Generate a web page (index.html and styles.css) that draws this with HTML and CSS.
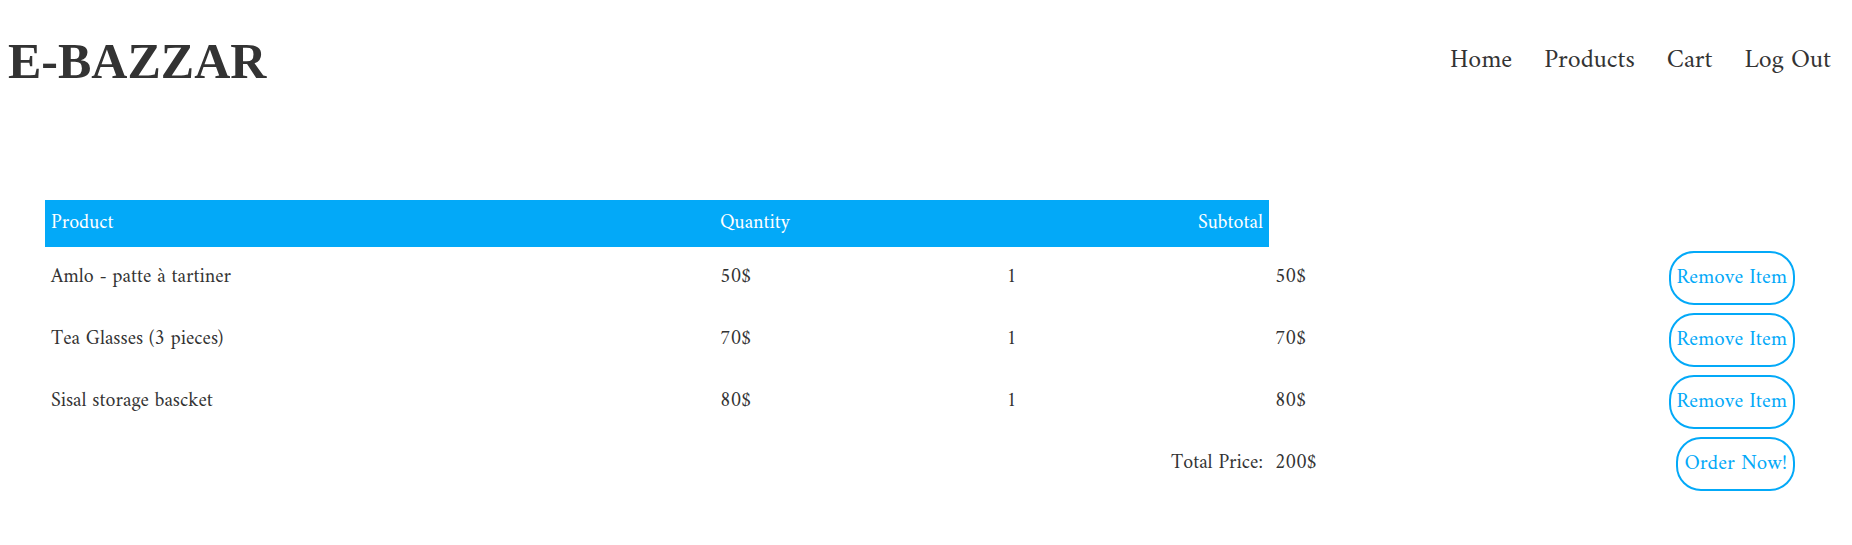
FILE: index.html
```html
<!DOCTYPE html>
<html lang="en">
<head>
  <meta charset="utf-8">
  <title>E-BAZZAR - Cart</title>
  <link rel="stylesheet" href="styles.css">
</head>
<body>
  <header class="navbar">
    <h1 class="logo">E-BAZZAR</h1>
    <nav>
      <ul class="menu">
        <li><a href="#">Home</a></li>
        <li><a href="#">Products</a></li>
        <li><a href="#">Cart</a></li>
        <li><a href="#">Log Out</a></li>
      </ul>
    </nav>
  </header>
  <main class="cart">
    <table class="cart-table">
      <colgroup>
        <col class="col-product">
        <col class="col-price">
        <col class="col-quantity">
        <col class="col-subtotal">
      </colgroup>
      <thead>
        <tr><th>Product</th><th>Quantity</th><th class="right">Subtotal</th></tr>
      </thead>
      <tbody>
        <tr><td>Amlo - patte à tartiner</td><td>50$</td><td>1</td><td><div class="amount">50$ <button class="btn" type="button">Remove Item</button></div></td></tr>
        <tr><td>Tea Glasses (3 pieces)</td><td>70$</td><td>1</td><td><div class="amount">70$ <button class="btn" type="button">Remove Item</button></div></td></tr>
        <tr><td>Sisal storage bascket</td><td>80$</td><td>1</td><td><div class="amount">80$ <button class="btn" type="button">Remove Item</button></div></td></tr>
        <tr><td></td><td></td><td class="right">Total Price:</td><td><div class="amount">200$ <button class="btn" type="button">Order Now!</button></div></td></tr>
      </tbody>
    </table>
  </main>
</body>
</html>
```
FILE: styles.css
```css
* {
  box-sizing: border-box;
  margin: 0;
  padding: 0;
}

body {
  background: #fff;
  color: #333;
  font-family: Amiri, "Liberation Serif", serif;
  font-size: 20px;
  line-height: 30px;
}

.navbar {
  display: flex;
  align-items: center;
  justify-content: space-between;
  padding: 31px 21px 0 8px;
}

.logo {
  font-family: "Liberation Serif", serif;
  font-size: 50px;
  line-height: 60px;
}

.menu {
  display: flex;
  gap: 32px;
  list-style: none;
  font-size: 26px;
}

.menu a {
  color: inherit;
  text-decoration: none;
}

.cart {
  padding: 109px 51px 48px 45px;
}

.cart-table {
  width: 100%;
  table-layout: fixed;
  border-collapse: collapse;
}

.col-product { width: 38.1%; }
.col-price { width: 16.3%; }
.col-quantity { width: 15.3%; }
.col-subtotal { width: 30.3%; }

th {
  padding: 9px 6px 8px;
  background: #03a9f8;
  color: #fff;
  font-weight: 400;
  text-align: left;
}

td {
  padding: 4px 6px;
}

.right {
  text-align: right;
}

.amount {
  display: flex;
  align-items: center;
  justify-content: space-between;
}

.btn {
  padding: 10px 6px;
  border: 2px solid #03a9f8;
  border-radius: 25px;
  background: #fff;
  color: #03a9f8;
  font-family: inherit;
  font-size: 21px;
  line-height: 30px;
  cursor: pointer;
}
```
